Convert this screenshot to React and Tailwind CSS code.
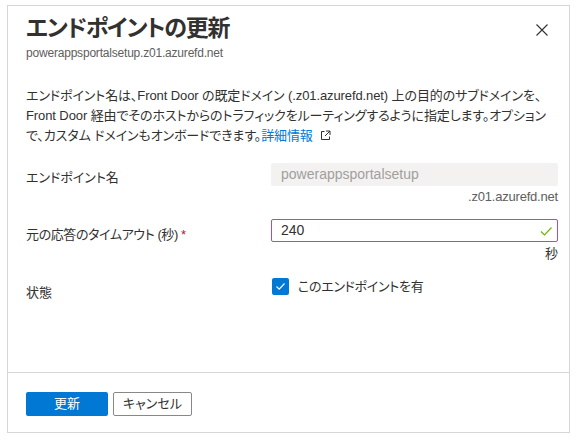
import React from "react";

const font = { fontFamily: '"Liberation Sans", "Noto Sans CJK JP", sans-serif' };

export default function App() {
  return (
    <div className="w-[579px] h-[445px] bg-white pl-[7px] pt-[5px] [font-feature-settings:'palt']" style={font}>
      <div className="w-[563px] h-[428px] border border-[#d6d6d6] flex flex-col text-[#323130]">
        <div className="flex-1 pl-[18px] pr-[12px]">
          <div className="flex items-start justify-between pt-[6px]">
            <div>
              <div className="text-[23px] leading-[32px] font-semibold tracking-[-1.2px] text-[#323130]">エンドポイントの更新</div>
              <div className="text-[12px] leading-[16px] tracking-[-0.2px] text-[#605e5c] mt-[1px]">powerappsportalsetup.z01.azurefd.net</div>
            </div>
            <button className="mt-[10px] mr-[7px] w-[16px] h-[16px] flex items-center justify-center text-[#323130]">
              <svg width="12" height="12" viewBox="0 0 12 12">
                <path d="M0.5 0.5 L11.5 11.5 M11.5 0.5 L0.5 11.5" stroke="#323130" strokeWidth="1.1" fill="none" />
              </svg>
            </button>
          </div>

          <p className="mt-[25px] text-[13px] leading-[20px] tracking-[-0.1px] text-[#323130] whitespace-nowrap">
            エンドポイント名は、Front Door の既定ドメイン (.z01.azurefd.net) 上の目的のサブドメインを、<br />
            Front Door 経由でそのホストからのトラフィックをルーティングするように指定します。オプション<br />
            で、カスタム ドメインもオンボードできます。
            <span className="text-[#0078d4]">詳細情報</span>
            <svg className="inline-block ml-[7px] align-[-1px]" width="11" height="11" viewBox="0 0 11 11">
              <path d="M4.5 1.5 H1.5 V9.5 H9.5 V6.5" stroke="#323130" strokeWidth="1" fill="none" />
              <path d="M6 1 H10 V5 M10 1 L5 6" stroke="#323130" strokeWidth="1" fill="none" />
            </svg>
          </p>

          <div className="mt-[17px] grid grid-cols-[245px_287px] text-[13px]">
            <div className="pt-[5px] leading-[20px]">エンドポイント名</div>
            <div>
              <div className="h-[23px] bg-[#f3f2f1] rounded-[2px] flex items-center px-[10px] text-[14px] text-[#a19f9d]">
                powerappsportalsetup
              </div>
              <div className="text-right text-[13px] tracking-[-0.2px] text-[#605e5c] leading-[18px] mt-[2px]">.z01.azurefd.net</div>
            </div>

            <div className="pt-[9px] leading-[20px] mt-[10px] tracking-[-0.4px]">
              元の応答のタイムアウト (秒) <span className="text-[#a4262c]">*</span>
            </div>
            <div className="mt-[13px]">
              <div className="h-[23px] border border-[#a050c8] rounded-[2px] flex items-center justify-between pl-[9px] pr-[4px] text-[14px] text-[#323130]">
                <span>240</span>
                <svg width="14" height="14" viewBox="0 0 14 14">
                  <path d="M2 7.5 L5.5 11 L12.5 3.5" stroke="#6bb700" strokeWidth="1.2" fill="none" />
                </svg>
              </div>
              <div className="text-right text-[13px] leading-[18px] mt-[3px]">秒</div>
            </div>

            <div className="pt-[12px] leading-[20px] mt-[8px]">状態</div>
            <div className="mt-[7px] flex items-center pl-[1px]">
              <div className="w-[17px] h-[17px] bg-[#0078d4] rounded-[2px] flex items-center justify-center">
                <svg width="11" height="11" viewBox="0 0 11 11">
                  <path d="M1.5 5.5 L4.2 8.2 L9.5 2.5" stroke="white" strokeWidth="1.2" fill="none" />
                </svg>
              </div>
              <span className="ml-[9px] text-[13px] leading-[20px] tracking-[-0.3px]">このエンドポイントを有</span>
            </div>
          </div>
        </div>

        <div className="h-[60px] border-t border-[#d6d6d6] flex items-start pt-[19px] pl-[18px] gap-[5px]">
          <button className="w-[82px] h-[24px] bg-[#0078d4] text-white text-[13px] rounded-[2px] flex items-center justify-center">
            更新
          </button>
          <button className="w-[79px] h-[24px] bg-white border border-[#8a8886] text-[13px] text-[#323130] rounded-[2px] flex items-center justify-center">
            キャンセル
          </button>
        </div>
      </div>
    </div>
  );
}
